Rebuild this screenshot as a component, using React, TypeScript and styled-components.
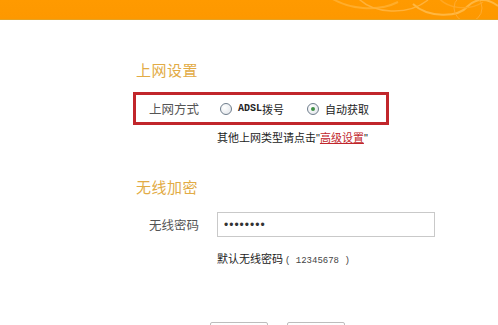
import styled, { createGlobalStyle } from 'styled-components';

const GlobalStyle = createGlobalStyle`
  html, body {
    margin: 0;
    padding: 0;
    background: #ffffff;
    font-family: "Noto Sans CJK SC", "Noto Sans", sans-serif;
  }
`;

const Page = styled.div`
  width: 498px;
  height: 325px;
  overflow: hidden;
  background: linear-gradient(#fffdf0 0px, #ffffff 14px);
`;

const Header = styled.header`
  position: relative;
  height: 19px;
  background: linear-gradient(#ff9a00, #fd9800);
  border-bottom: 1px solid #e6a224;
  overflow: hidden;
`;

const Swirls = styled.svg`
  position: absolute;
  right: 0;
  top: 0;
`;

const Main = styled.main`
  padding: 40px 0 0 133px;
`;

const SectionTitle = styled.h2<{ $gap: number }>`
  margin: 0 0 ${(p) => p.$gap}px 3px;
  font-size: 15px;
  line-height: 20px;
  font-weight: 400;
  color: #e2ab45;
  letter-spacing: 0.5px;
`;

const HighlightBox = styled.div`
  width: 250px;
  height: 27px;
  border: 3px solid #c1262b;
  display: flex;
  align-items: center;
`;

const FieldRow = styled.div`
  display: flex;
  align-items: center;
`;

const FieldLabel = styled.span<{ $inset?: boolean }>`
  width: ${(p) => (p.$inset ? 81 : 84)}px;
  box-sizing: border-box;
  padding-right: 18px;
  text-align: right;
  font-size: 12.5px;
  color: #555;
  flex-shrink: 0;
`;

const RadioGroup = styled.div`
  display: flex;
  align-items: center;
  padding-left: 3px;
`;

const RadioOption = styled.label<{ $width: number }>`
  display: flex;
  align-items: center;
  width: ${(p) => p.$width}px;
  font-size: 11px;
  color: #222;
`;

const RadioDot = styled.span<{ $checked?: boolean }>`
  position: relative;
  width: 10px;
  height: 10px;
  margin-right: 6px;
  border-radius: 50%;
  border: 1px solid #6f7d8c;
  background: radial-gradient(circle at 35% 35%, #ffffff, #dfe3e8);
  &::after {
    content: '';
    display: ${(p) => (p.$checked ? 'block' : 'none')};
    position: absolute;
    left: 3px;
    top: 3px;
    width: 4px;
    height: 4px;
    border-radius: 50%;
    background: #3f8f46;
  }
`;

const Mono = styled.span`
  font-family: "Liberation Mono", "DejaVu Sans Mono", monospace;
  font-size: 10px;
  font-weight: 700;
`;

const Hint = styled.p<{ $top: number; $bottom: number }>`
  margin: ${(p) => p.$top}px 0 ${(p) => p.$bottom}px 84px;
  font-size: 11px;
  line-height: 16px;
  color: #222;
`;

const Quote = styled.span`
  font-family: "Liberation Sans", Arial, sans-serif;
  font-size: 11px;
`;

const HintLink = styled.a`
  color: #c1262b;
  text-decoration: underline;
`;

const HintNum = styled.span`
  font-family: "Liberation Mono", "DejaVu Sans Mono", monospace;
  font-size: 9px;
  color: #444;
  margin-left: 2px;
`;

const PasswordInput = styled.input`
  width: 218px;
  height: 25px;
  box-sizing: border-box;
  border: 1px solid #c9c9c9;
  padding: 0 6px;
  font-size: 12px;
  letter-spacing: 1px;
  color: #333;
  outline: none;
`;

const Buttons = styled.div`
  display: flex;
  gap: 19px;
  padding-left: 77px;
`;

const Button = styled.button`
  width: 58px;
  height: 24px;
  border: 1px solid #bdbdbd;
  border-radius: 2px;
  background: linear-gradient(#ffffff, #eeeeee);
  font-family: "Noto Sans CJK SC", sans-serif;
  font-size: 12px;
  letter-spacing: 8px;
  padding: 4px 0 0 8px;
  color: #222;
`;

export default function App() {
  return (
    <Page>
      <GlobalStyle />
      <Header>
        <Swirls width="180" height="19" viewBox="0 0 180 19" fill="none">
          <path d="M10 -4 C30 10 60 12 80 2" stroke="#ffad2a" strokeWidth="2" />
          <path d="M40 -2 C55 14 90 16 110 0" stroke="#ffb23a" strokeWidth="1.5" />
          <path d="M95 4 C110 18 140 18 150 6 C158 -2 170 -2 180 6" stroke="#ffb741" strokeWidth="2" />
          <path d="M120 -3 C128 8 150 12 165 2" stroke="#ffa722" strokeWidth="1.5" />
          <circle cx="150" cy="8" r="14" stroke="#ffac30" strokeWidth="1" />
        </Swirls>
      </Header>
      <Main>
        <SectionTitle $gap={12}>上网设置</SectionTitle>
        <HighlightBox>
          <FieldLabel $inset>上网方式</FieldLabel>
          <RadioGroup>
            <RadioOption $width={87}>
              <RadioDot />
              <Mono>ADSL</Mono>拨号
            </RadioOption>
            <RadioOption $width={70}>
              <RadioDot $checked />
              自动获取
            </RadioOption>
          </RadioGroup>
        </HighlightBox>
        <Hint $top={4} $bottom={31}>
          其他上网类型请点击<Quote>"</Quote>
          <HintLink>高级设置</HintLink>
          <Quote>"</Quote>
        </Hint>
        <SectionTitle $gap={15}>无线加密</SectionTitle>
        <FieldRow>
          <FieldLabel>无线密码</FieldLabel>
          <PasswordInput type="password" defaultValue="12345678" />
        </FieldRow>
        <Hint $top={13} $bottom={53}>
          默认无线密码<HintNum>( 12345678 )</HintNum>
        </Hint>
        <Buttons>
          <Button>确定</Button>
          <Button>取消</Button>
        </Buttons>
      </Main>
    </Page>
  );
}
